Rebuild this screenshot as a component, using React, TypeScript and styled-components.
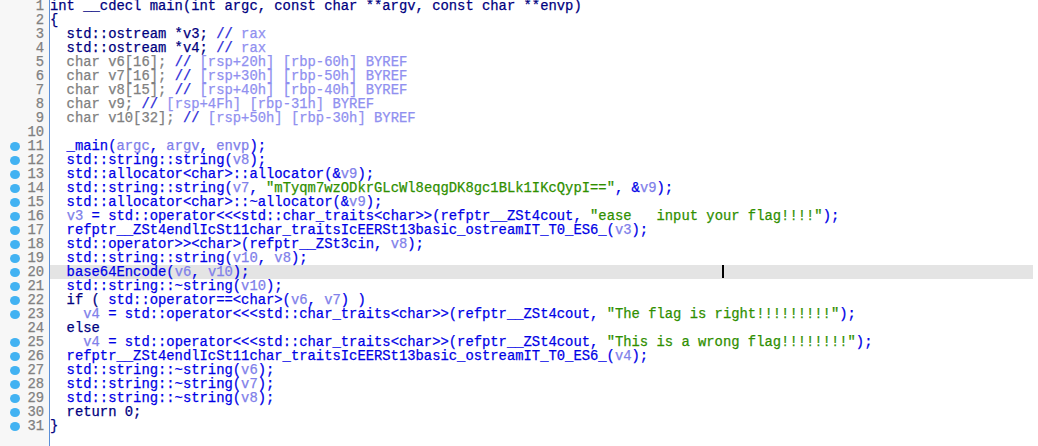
import React from "react";
import styled, { createGlobalStyle } from "styled-components";

type Kind = "n" | "b" | "v" | "cs" | "c" | "g" | "s";
type Tok = [Kind, string];

const GlobalStyle = createGlobalStyle`
  html, body {
    margin: 0;
    padding: 0;
    background: #ffffff;
    overflow: hidden;
  }
`;

const colors: Record<Kind, string> = {
  n: "#000080",
  b: "#0000e6",
  v: "#8080ea",
  cs: "#2a2ad8",
  c: "#9090f0",
  g: "#808080",
  s: "#2f8f00",
};

export const Editor = styled.div`
  display: flex;
  flex-direction: column;
  width: 1033px;
  height: 447px;
  margin-top: -1px;
  font-family: "Liberation Mono", "DejaVu Sans Mono", monospace;
  font-size: 13.85px;
  -webkit-text-stroke: 0.25px currentColor;
`;

export const Row = styled.div<{ $active?: boolean }>`
  display: flex;
  height: 14px;
  line-height: 14px;
  background: ${(p) => (p.$active ? "#e4e4e4" : "#ffffff")};
`;

export const Filler = styled.div`
  display: flex;
  flex: 1;
`;

export const Gutter = styled.div`
  display: flex;
  align-items: center;
  width: 49px;
  flex-shrink: 0;
  background: #f7f7f7;
  border-right: 1px solid #5b8fd8;
`;

export const Dot = styled.span<{ $on: boolean }>`
  width: 10px;
  height: 9px;
  margin-left: 10px;
  border-radius: 50%;
  background: ${(p) => (p.$on ? "#42b2f2" : "transparent")};
`;

export const LineNo = styled.span`
  flex: 1;
  text-align: right;
  padding-right: 5px;
  color: #808080;
`;

export const Code = styled.div`
  position: relative;
  flex: 1;
  white-space: pre;
`;

export const Span = styled.span<{ $kind: Kind }>`
  color: ${(p) => colors[p.$kind]};
`;

export const Caret = styled.span`
  position: absolute;
  left: 672px;
  top: 0;
  width: 2px;
  height: 13px;
  background: #000000;
`;

const cout = (v: string, indent: string, msg: string): Tok[] => [
  ["b", indent],
  ["v", v],
  ["b", " = std::operator<<<std::char_traits<char>>(refptr__ZSt4cout, "],
  ["s", msg],
  ["b", ");"],
];

const decl = (d: string, rsp: string, rbp: string): Tok[] => [
  ["g", "  " + d + " "],
  ["cs", "// "],
  ["c", `[${rsp}] [${rbp}] BYREF`],
];

const lines: { toks: Tok[]; dot: boolean }[] = [
  { dot: false, toks: [["n", "int __cdecl main(int argc, const char **argv, const char **envp)"]] },
  { dot: false, toks: [["n", "{"]] },
  { dot: false, toks: [["n", "  std::ostream *v3; "], ["cs", "// "], ["c", "rax"]] },
  { dot: false, toks: [["n", "  std::ostream *v4; "], ["cs", "// "], ["c", "rax"]] },
  { dot: false, toks: decl("char v6[16];", "rsp+20h", "rbp-60h") },
  { dot: false, toks: decl("char v7[16];", "rsp+30h", "rbp-50h") },
  { dot: false, toks: decl("char v8[15];", "rsp+40h", "rbp-40h") },
  { dot: false, toks: decl("char v9;", "rsp+4Fh", "rbp-31h") },
  { dot: false, toks: decl("char v10[32];", "rsp+50h", "rbp-30h") },
  { dot: false, toks: [] },
  { dot: true, toks: [["b", "  _main("], ["v", "argc"], ["b", ", "], ["v", "argv"], ["b", ", "], ["v", "envp"], ["b", ");"]] },
  { dot: true, toks: [["b", "  std::string::string("], ["v", "v8"], ["b", ");"]] },
  { dot: true, toks: [["b", "  std::allocator<char>::allocator(&"], ["v", "v9"], ["b", ");"]] },
  {
    dot: true,
    toks: [
      ["b", "  std::string::string("],
      ["v", "v7"],
      ["b", ", "],
      ["s", '"mTyqm7wzODkrGLcWl8eqgDK8gc1BLk1IKcQypI=="'],
      ["b", ", &"],
      ["v", "v9"],
      ["b", ");"],
    ],
  },
  { dot: true, toks: [["b", "  std::allocator<char>::~allocator(&"], ["v", "v9"], ["b", ");"]] },
  { dot: true, toks: cout("v3", "  ", '"ease   input your flag!!!!"') },
  { dot: true, toks: [["b", "  refptr__ZSt4endlIcSt11char_traitsIcEERSt13basic_ostreamIT_T0_ES6_("], ["v", "v3"], ["b", ");"]] },
  { dot: true, toks: [["b", "  std::operator>><char>(refptr__ZSt3cin, "], ["v", "v8"], ["b", ");"]] },
  { dot: true, toks: [["b", "  std::string::string("], ["v", "v10"], ["b", ", "], ["v", "v8"], ["b", ");"]] },
  { dot: true, toks: [["b", "  base64Encode("], ["v", "v6"], ["b", ", "], ["v", "v10"], ["b", ");"]] },
  { dot: true, toks: [["b", "  std::string::~string("], ["v", "v10"], ["b", ");"]] },
  {
    dot: true,
    toks: [["n", "  if ( "], ["b", "std::operator==<char>("], ["v", "v6"], ["b", ", "], ["v", "v7"], ["b", ") )"]],
  },
  { dot: true, toks: cout("v4", "    ", '"The flag is right!!!!!!!!!"') },
  { dot: false, toks: [["n", "  else"]] },
  { dot: true, toks: cout("v4", "    ", '"This is a wrong flag!!!!!!!!"') },
  { dot: true, toks: [["b", "  refptr__ZSt4endlIcSt11char_traitsIcEERSt13basic_ostreamIT_T0_ES6_("], ["v", "v4"], ["b", ");"]] },
  { dot: true, toks: [["b", "  std::string::~string("], ["v", "v6"], ["b", ");"]] },
  { dot: true, toks: [["b", "  std::string::~string("], ["v", "v7"], ["b", ");"]] },
  { dot: true, toks: [["b", "  std::string::~string("], ["v", "v8"], ["b", ");"]] },
  { dot: true, toks: [["n", "  return 0;"]] },
  { dot: true, toks: [["n", "}"]] },
];

const ACTIVE = 20;

export default function App() {
  return (
    <>
      <GlobalStyle />
      <Editor>
        {lines.map((line, i) => (
          <Row key={i} $active={i + 1 === ACTIVE}>
            <Gutter>
              <Dot $on={line.dot} />
              <LineNo>{i + 1}</LineNo>
            </Gutter>
            <Code>
              {line.toks.map(([k, t], j) => (
                <Span key={j} $kind={k}>
                  {t}
                </Span>
              ))}
              {i + 1 === ACTIVE && <Caret />}
            </Code>
          </Row>
        ))}
        <Filler>
          <Gutter />
        </Filler>
      </Editor>
    </>
  );
}
